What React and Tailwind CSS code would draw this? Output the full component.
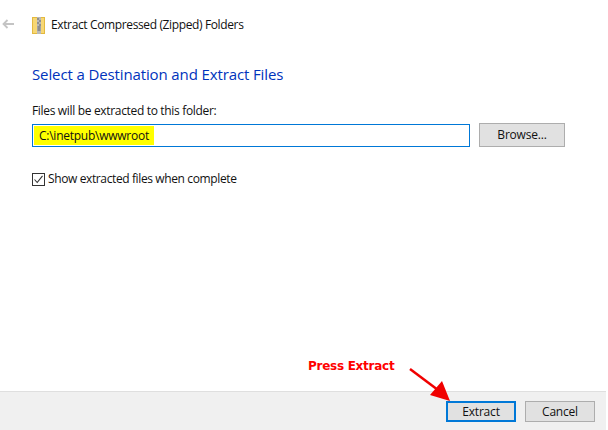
export default function App() {
  return (
    <div className="relative w-[608px] h-[430px] bg-white flex flex-col overflow-hidden text-[12px] text-[#111] font-['Open_Sans','Noto_Sans',sans-serif]">
      <header className="h-[50px] flex items-center pl-[2px] shrink-0">
        <svg width="12" height="10" viewBox="0 0 12 10" className="shrink-0 -mt-[2px]" fill="none" stroke="#c4c4c4" strokeWidth="1.8">
          <path d="M12 5H1.5M5.5 1 1.5 5l4 4" />
        </svg>
        <svg width="13" height="17" viewBox="0 0 13 17" className="ml-[18px] shrink-0">
          <rect x="0.5" y="0.5" width="12" height="16" fill="#f7d774" stroke="#e3b93f" />
          <rect x="5" y="0" width="4" height="17" fill="#b9b9b9" />
          <path d="M6 1v2M8 3v2M6 5v2M8 7v2" stroke="#666" strokeWidth="1" />
          <rect x="5.5" y="9" width="3" height="5" fill="#8d8d8d" />
        </svg>
        <span className="ml-[6px] tracking-[-0.37px]">Extract Compressed (Zipped) Folders</span>
      </header>
      <main className="flex-1 pl-[32px] flex flex-col">
        <h1 className="text-[15px] leading-[20px] mt-[14px] text-[#0033bc] tracking-[-0.12px]">Select a Destination and Extract Files</h1>
        <label className="mt-[19px] leading-[16px] tracking-[-0.33px]">Files will be extracted to this folder:</label>
        <div className="flex items-center mt-[4px]">
          <div className="w-[438px] h-[23px] border border-[#0078d7] flex items-center pl-[1px]">
            <span className="bg-[#ffff00] h-[19px] leading-[19px] pl-[5px] pr-[5px] tracking-[-0.25px]">C:\inetpub\wwwroot</span>
          </div>
          <button className="ml-[9px] w-[86px] h-[24px] bg-[#e1e1e1] border border-[#adadad] tracking-[-0.2px]">Browse...</button>
        </div>
        <div className="flex items-center mt-[23px]">
          <div className="w-[13px] h-[13px] border border-[#333] flex items-center justify-center shrink-0">
            <svg width="11" height="11" viewBox="0 0 11 11" fill="none" stroke="#333" strokeWidth="1.1">
              <path d="M1.5 5.5 4.2 8.5 9.5 1.8" />
            </svg>
          </div>
          <span className="ml-[3px] tracking-[-0.38px]">Show extracted files when complete</span>
        </div>
      </main>
      <footer className="h-[39px] w-[606px] bg-[#f0f0f0] border-t border-[#dfdfdf] flex items-start justify-end gap-[9px] pt-[9px] pr-[11px] shrink-0">
        <button className="w-[70px] h-[21px] bg-[#e1e1e1] border-2 border-[#0078d7] tracking-[-0.2px] leading-none">Extract</button>
        <button className="w-[70px] h-[21px] bg-[#e1e1e1] border border-[#adadad] tracking-[-0.2px] leading-none">Cancel</button>
      </footer>
      <span className="absolute left-[308px] top-[358px] text-[12px] leading-[16px] font-bold text-[#ff0000] font-['DejaVu_Sans',sans-serif] tracking-[-0.27px]">Press Extract</span>
      <svg className="absolute left-[405px] top-[365px]" width="50" height="38" viewBox="0 0 50 38">
        <path d="M5 4 33 25" stroke="#f00000" strokeWidth="2.5" />
        <path d="M45 36 25 30 37 16Z" fill="#f00000" />
      </svg>
    </div>
  );
}
